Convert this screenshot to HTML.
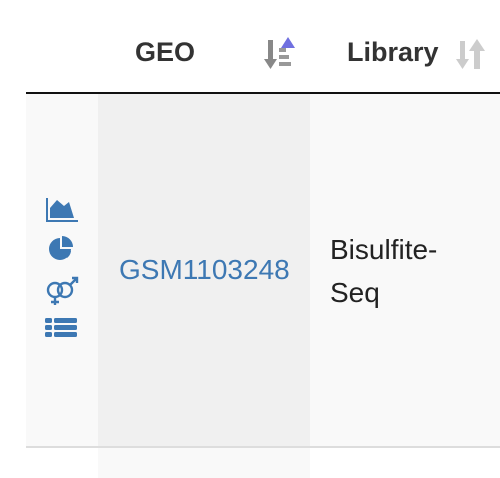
<!DOCTYPE html>
<html><head><style>
body{margin:0;width:500px;height:478px;background:#fff;position:relative;overflow:hidden;font-family:"Liberation Sans",sans-serif}
div{position:absolute;white-space:nowrap}
.h{font-weight:bold;font-size:27px;color:#333;top:36px;line-height:32px}
</style></head><body>
<div style="left:26px;top:92px;width:474px;height:2px;background:#111"></div>
<div style="left:26px;top:94px;width:474px;height:352px;background:#f9f9f9"></div>
<div style="left:26px;top:446px;width:474px;height:2px;background:#ddd"></div>
<div style="left:98px;top:94px;width:212px;height:352px;background:#f0f0f0"></div>
<div style="left:98px;top:448px;width:212px;height:30px;background:#f9f9f9"></div>
<div class="h" style="left:135px">GEO</div>
<div class="h" style="left:347px">Library</div>
<svg style="position:absolute;left:264px;top:36px" width="36" height="36">
<rect x="4" y="4" width="5" height="20" fill="#888"/><polygon points="0,23 13,23 6.5,33" fill="#888"/>
<rect x="15" y="12" width="7" height="4" fill="#999"/><rect x="15" y="19" width="10" height="4" fill="#999"/><rect x="15" y="26" width="12" height="4" fill="#999"/>
<polygon points="17,12 24,1 31,12" fill="#7070e0"/>
</svg>
<svg style="position:absolute;left:455px;top:36px" width="40" height="36">
<rect x="5" y="5" width="5" height="19" fill="#ccc"/><polygon points="1,23 14,23 7.5,33" fill="#ccc"/>
<rect x="19" y="14" width="6" height="19" fill="#ccc"/><polygon points="14,15 30,15 22,3" fill="#ccc"/>
</svg>
<svg style="position:absolute;left:44px;top:196px" width="36" height="148" fill="#3d78b3">
<path d="M2 2v24h32v-2H4V2z"/><path d="M6 22V12l7-8 7 6 5-4 5 16z"/>
<path d="M16 42a11 11 0 1 0 11 11H16z"/><path d="M18 40v11h11a11 11 0 0 0-11-11z"/><path d="M19 55l8 0a10 10 0 0 1-4 7z"/>
<g fill="none" stroke="#3d78b3" stroke-width="2.4"><circle cx="11" cy="94" r="7"/><circle cx="21" cy="94" r="7"/><path d="M11 101v8M7 106h8M26 89l7-7M28 82h5v5"/></g>
<rect x="1" y="122" width="7" height="5" rx="1.5"/><rect x="10" y="122" width="23" height="5" rx="1.5"/>
<rect x="1" y="129" width="7" height="5" rx="1.5"/><rect x="10" y="129" width="23" height="5" rx="1.5"/>
<rect x="1" y="136" width="7" height="5" rx="1.5"/><rect x="10" y="136" width="23" height="5" rx="1.5"/>
</svg>
<div style="left:119px;top:253px;font-size:28px;line-height:34px;color:#3d78b3">GSM1103248</div>
<div style="left:330px;top:228px;font-size:28px;color:#222;line-height:43px">Bisulfite-<br>Seq</div>
</body></html>
